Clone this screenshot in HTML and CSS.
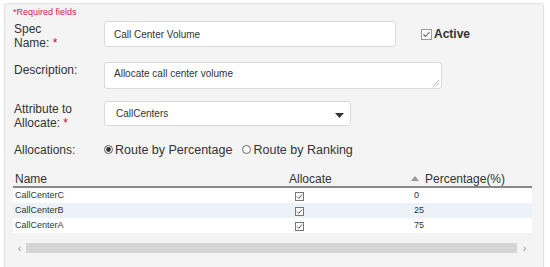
FILE: index.html
```html
<!DOCTYPE html>
<html lang="en">
<head>
  <meta charset="UTF-8" />
  <title>Allocation Spec</title>
  <link rel="stylesheet" href="styles.css">
</head>
<body>
  <div class="panel">
    <div class="req">*Required fields</div>

    <div class="row">
      <label class="lbl">Spec<br>Name:&nbsp;<span class="star">*</span></label>
      <div class="line">
        <input class="txt name-input" type="text" value="Call Center Volume">
        <span class="active">
          <svg width="11" height="11" viewBox="0 0 11 11"><rect x="0.5" y="0.5" width="10" height="10" fill="#fafafa" stroke="#9a9a9a"/><path d="M2.5 5.5 L4.5 7.5 L8.5 3" fill="none" stroke="#666" stroke-width="1.1"/></svg>
          Active
        </span>
      </div>
    </div>

    <div class="row">
      <label class="lbl">Description:</label>
      <div class="area">
        <textarea class="txt desc-input">Allocate call center volume</textarea>
        <svg class="grip" width="6" height="6" viewBox="0 0 6 6"><path d="M6 0 L0 6 M6 3 L3 6" stroke="#bbb" stroke-width="1"/></svg>
      </div>
    </div>

    <div class="row">
      <label class="lbl">Attribute to<br>Allocate:&nbsp;<span class="star">*</span></label>
      <div class="select">
        <span>CallCenters</span>
        <svg class="caret" width="9" height="5" viewBox="0 0 9 5"><polygon points="0,0 9,0 4.5,5" fill="#333"/></svg>
      </div>
    </div>

    <div class="row alloc">
      <label class="lbl">Allocations:</label>
      <div class="radios">
        <span class="radio">
          <svg width="9" height="9" viewBox="0 0 9 9"><circle cx="4.5" cy="4.5" r="4" fill="#fff" stroke="#555"/><circle cx="4.5" cy="4.5" r="2.4" fill="#333"/></svg>
          Route by Percentage
        </span>
        <span class="radio">
          <svg width="9" height="9" viewBox="0 0 9 9"><circle cx="4.5" cy="4.5" r="4" fill="#fff" stroke="#666"/></svg>
          Route by Ranking
        </span>
      </div>
    </div>

    <table class="grid">
      <thead>
        <tr>
          <th class="c-name">Name</th>
          <th class="c-alloc">Allocate</th>
          <th class="c-pct"><svg class="sort" width="8" height="5" viewBox="0 0 8 5"><polygon points="4,0 8,5 0,5" fill="#999"/></svg>Percentage(%)</th>
        </tr>
      </thead>
      <tbody>
        <tr>
          <td>CallCenterC</td>
          <td><svg class="chk" width="9" height="9" viewBox="0 0 9 9"><rect x="0.5" y="0.5" width="8" height="8" fill="#fff" stroke="#777"/><path d="M2 4.5 L3.8 6.3 L7 2.6" fill="none" stroke="#555"/></svg></td>
          <td class="pct">0</td>
        </tr>
        <tr class="alt">
          <td>CallCenterB</td>
          <td><svg class="chk" width="9" height="9" viewBox="0 0 9 9"><rect x="0.5" y="0.5" width="8" height="8" fill="#fff" stroke="#777"/><path d="M2 4.5 L3.8 6.3 L7 2.6" fill="none" stroke="#555"/></svg></td>
          <td class="pct">25</td>
        </tr>
        <tr>
          <td>CallCenterA</td>
          <td><svg class="chk" width="9" height="9" viewBox="0 0 9 9"><rect x="0.5" y="0.5" width="8" height="8" fill="#fff" stroke="#777"/><path d="M2 4.5 L3.8 6.3 L7 2.6" fill="none" stroke="#555"/></svg></td>
          <td class="pct">75</td>
        </tr>
      </tbody>
    </table>

    <div class="hscroll">
      <span class="arrow left">&lsaquo;</span>
      <span class="track"></span>
      <span class="arrow right">&rsaquo;</span>
    </div>
  </div>
</body>
</html>
```

FILE: styles.css
```css
* {
  box-sizing: border-box;
}

body {
  margin: 0;
  font-family: "Liberation Sans", Arial, sans-serif;
  color: #333;
  background: #fff;
}

.panel {
  margin: 3px 0 0 4px;
  width: 540px;
  height: 270px;
  padding: 3px 10px 0 8px;
  background: #f4f4f4;
  border: 1px solid #e2e2e2;
  border-radius: 3px;
  box-shadow: 0 1px 2px rgba(0, 0, 0, 0.06);
}

.req {
  font-size: 9px;
  line-height: 11px;
  color: #d4145a;
  margin-bottom: 3px;
}

.row {
  display: flex;
  align-items: flex-start;
  margin-bottom: 12px;
}

.lbl {
  box-sizing: content-box;
  width: 66px;
  padding: 1px 0 0 1px;
  margin-right: 24px;
  font-size: 12px;
  line-height: 14px;
}

.star {
  color: #c8102e;
}

.line {
  display: flex;
  align-items: center;
}

.txt {
  font-family: "Liberation Sans", Arial, sans-serif;
  font-size: 10px;
  color: #333;
  background: #fff;
  border: 1px solid #dadada;
  border-radius: 3px;
  outline: none;
}

.name-input {
  width: 292px;
  height: 26px;
  padding: 0 9px;
}

.active {
  display: flex;
  align-items: center;
  gap: 2px;
  margin-left: 25px;
  font-size: 12px;
  font-weight: bold;
}

.area {
  position: relative;
  display: flex;
}

.desc-input {
  width: 338px;
  height: 27px;
  padding: 4px 9px 0;
  line-height: 14px;
  resize: none;
  overflow: hidden;
}

.grip {
  position: absolute;
  right: 3px;
  bottom: 3px;
}

.select {
  position: relative;
  width: 247px;
  height: 25px;
  display: flex;
  align-items: center;
  padding-left: 11px;
  font-size: 10px;
  background: #fff;
  border: 1px solid #dadada;
  border-radius: 3px;
}

.caret {
  position: absolute;
  right: 6px;
  top: 11px;
}

.alloc {
  align-items: center;
  margin-bottom: 15px;
}

.radios {
  display: flex;
  gap: 10px;
  font-size: 12.5px;
}

.radio {
  display: flex;
  align-items: center;
  gap: 2px;
}

.grid {
  width: 519px;
  border-collapse: collapse;
  font-size: 9px;
}

.grid th {
  font-size: 12px;
  font-weight: normal;
  line-height: 14px;
  text-align: left;
  padding: 0 0 0 2px;
  border-bottom: 2px solid #888;
}

.c-name {
  width: 274px;
}

.c-alloc {
  width: 122px;
}

.sort {
  margin: 0 6px 3px 0;
  vertical-align: middle;
}

.grid td {
  height: 15px;
  padding: 0 0 0 2px;
  background: #fff;
  line-height: 15px;
}

.grid tr.alt td {
  background: #edf2f9;
}

.chk {
  display: block;
  margin: 2px 0 0 6px;
}

.grid td.pct {
  padding-left: 5px;
}

.hscroll {
  display: flex;
  align-items: center;
  width: 519px;
  height: 10px;
  margin-top: 10px;
}

.arrow {
  font-size: 11px;
  line-height: 10px;
  color: #999;
  text-align: center;
}

.arrow.left {
  width: 13px;
}

.arrow.right {
  width: 15px;
}

.track {
  flex: 1;
  height: 10px;
  background: #d5d5d5;
}
```
